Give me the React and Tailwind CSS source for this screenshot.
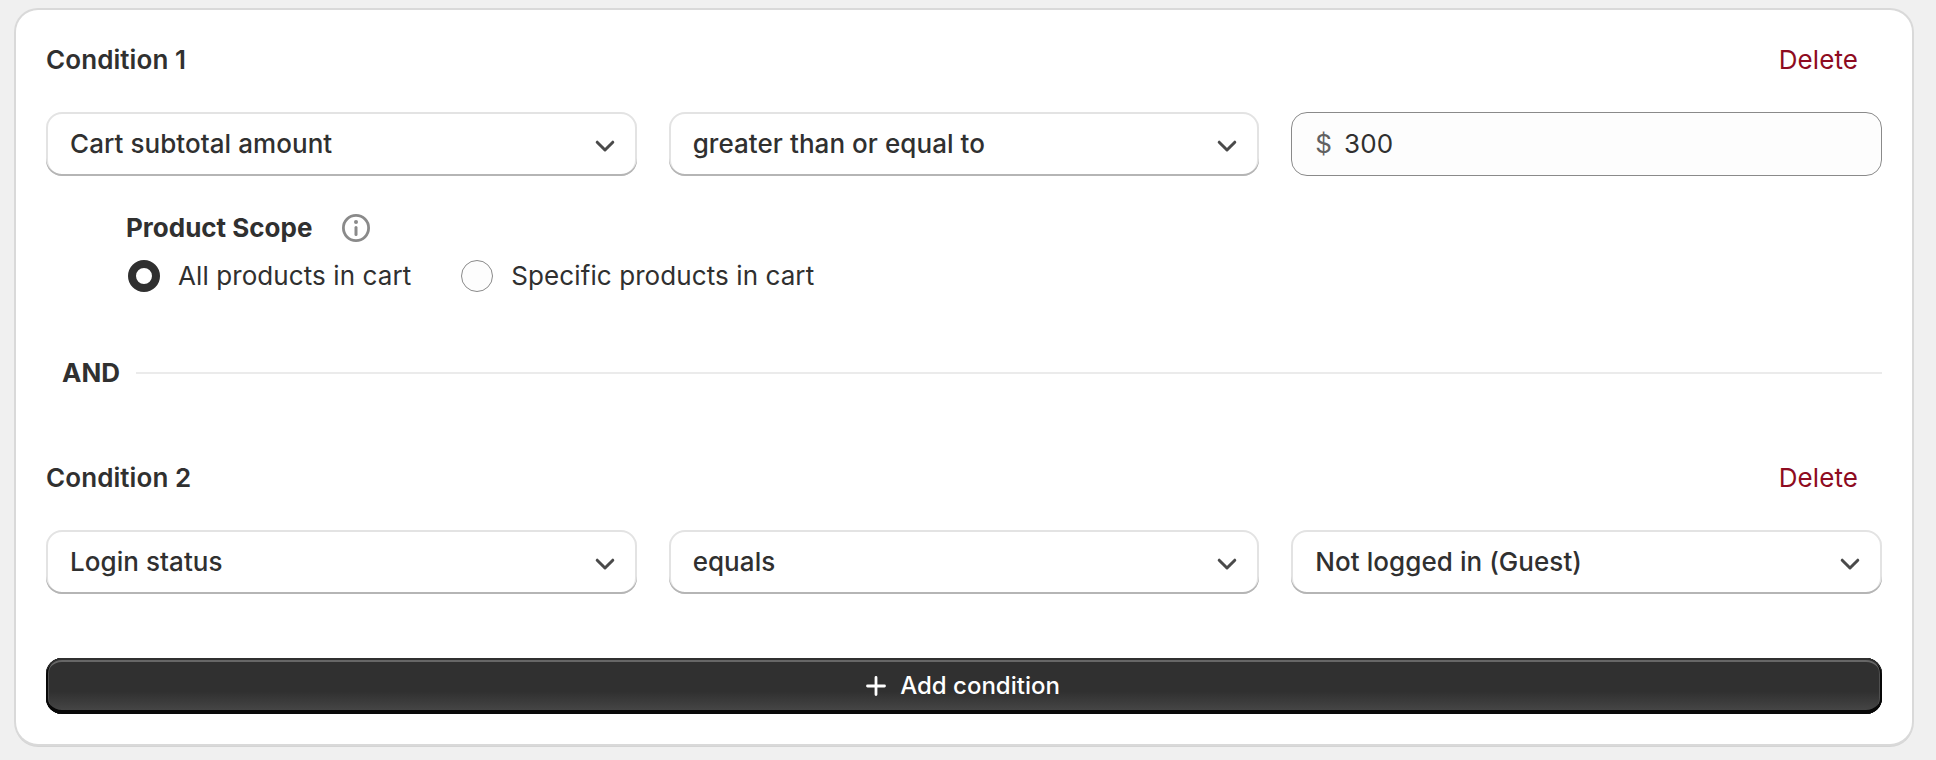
function Select({ label }) {
  return (
    <button
      type="button"
      className="flex h-16 items-center justify-between rounded-[16px] bg-white pr-[22px] pl-6 text-[26px] leading-10 font-medium tracking-[0.06px] shadow-[inset_0_-2px_0_#b5b5b5,inset_0_0_0_2px_#e3e3e3]"
    >
      <span>{label}</span>
      <svg className="mt-[3px] h-5 w-5" viewBox="0 0 20 20" fill="none" stroke="#4a4a4a" strokeWidth="3" strokeLinecap="round" strokeLinejoin="round">
        <path d="M2.2 6.2 10 14 17.8 6.2" />
      </svg>
    </button>
  );
}

function Header({ title }) {
  return (
    <div className="flex h-10 items-center justify-between pr-6 text-[26px] leading-10">
      <h2 className="font-semibold tracking-[0.08px]">{title}</h2>
      <button type="button" className="tracking-[0.09px] text-[#8e0b21]">Delete</button>
    </div>
  );
}

export default function App() {
  return (
    <main className="h-[760px] w-[1936px] bg-[#f0f0f0] px-4 pt-[10px] font-['Inter',sans-serif] text-[#303030]">
      <section className="h-[734px] w-[1896px] rounded-[22px] bg-white px-[30px] pt-[30px] shadow-[0_0_0_2px_#d9d9d9,0_2px_0_1px_#d4d4d4]">
        <Header title="Condition 1" />
        <div className="mt-8 grid grid-cols-3 gap-8">
          <Select label="Cart subtotal amount" />
          <Select label="greater than or equal to" />
          <label className="flex h-16 items-center gap-3 rounded-[16px] border border-[#8a8a8a] bg-[#fdfdfd] px-[23px] text-[26px] leading-10 tracking-[0.09px]">
            <span className="text-[#616161]">$</span>
            <span>300</span>
          </label>
        </div>
        <div className="pt-8 pl-20 text-[26px] leading-10">
          <div className="flex h-10 items-center gap-[30px]">
            <span className="font-bold">Product Scope</span>
            <svg className="h-7 w-7" viewBox="0 0 28 28" fill="none" stroke="#8a8a8a">
              <circle cx="14" cy="14" r="12.6" strokeWidth="2.8" />
              <circle cx="14" cy="8" r="2" fill="#8a8a8a" stroke="none" />
              <path d="M14 13.5V20.5" strokeWidth="3" strokeLinecap="round" />
            </svg>
          </div>
          <div className="mt-2 flex h-10 items-center pl-[2px] tracking-[0.09px]">
            <span className="h-8 w-8 rounded-full border-8 border-[#303030] bg-white" />
            <span className="ml-[18px]">All products in cart</span>
            <span className="ml-[50px] h-8 w-8 rounded-full border border-[#8a8a8a] bg-[#fdfdfd]" />
            <span className="ml-[18px]">Specific products in cart</span>
          </div>
        </div>
        <div className="mt-[57px] mb-[65px] flex h-10 items-center gap-4 pl-4">
          <span className="text-[26px] leading-10 font-[650]">AND</span>
          <span className="h-[2px] flex-1 bg-[#ebebeb]" />
        </div>
        <Header title="Condition 2" />
        <div className="mt-8 grid grid-cols-3 gap-8">
          <Select label="Login status" />
          <Select label="equals" />
          <Select label="Not logged in (Guest)" />
        </div>
        <button
          type="button"
          className="mt-16 flex h-14 w-full items-center justify-center gap-[14px] rounded-[16px] bg-linear-to-b from-[#303030] from-60% to-[#4a4a4a] pr-[2px] text-[24px] leading-8 font-medium text-white shadow-[inset_0_-4px_0_#080808,inset_0_2px_0_#303030,inset_2px_0_0_#080808,inset_-2px_0_0_#080808,inset_0_4px_0_#666,inset_3px_0_0_#505050,inset_-3px_0_0_#505050]"
        >
          <svg className="h-5 w-5" viewBox="0 0 20 20" fill="none" stroke="white" strokeWidth="2.8" strokeLinecap="round">
            <path d="M10 1.5V18.5M1.5 10H18.5" />
          </svg>
          <span>Add condition</span>
        </button>
      </section>
    </main>
  );
}
